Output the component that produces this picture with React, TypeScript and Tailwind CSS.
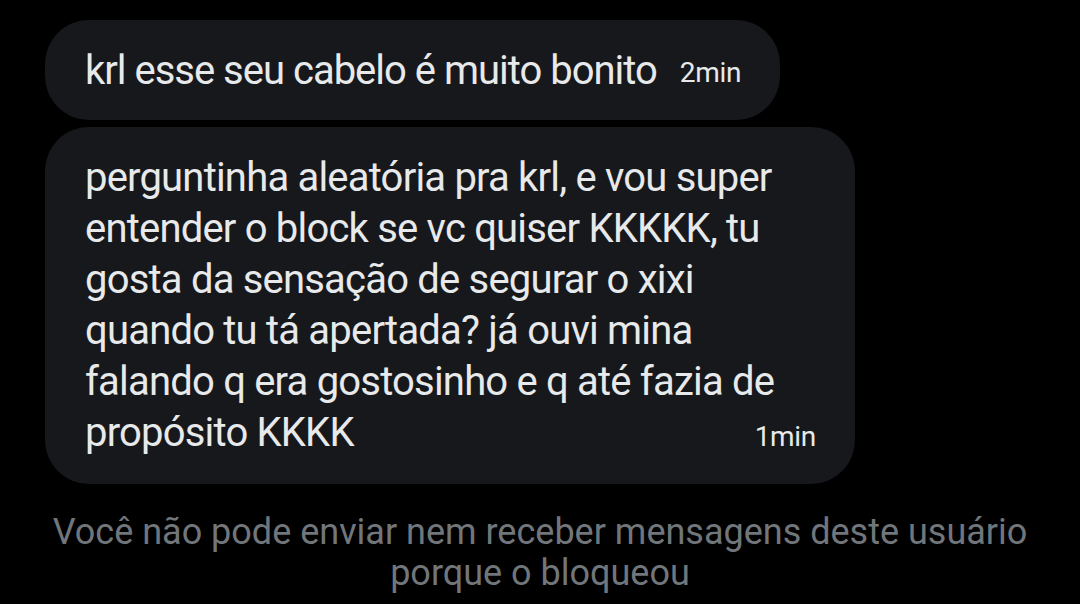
const lines = [
  "perguntinha aleatória pra krl, e vou super",
  "entender o block se vc quiser KKKKK, tu",
  "gosta da sensação de segurar o xixi",
  "quando tu tá apertada? já ouvi mina",
  "falando q era gostosinho e q até fazia de",
];

export default function App() {
  return (
    <div className="w-[1080px] h-[604px] overflow-hidden bg-black pt-[20px] font-['Roboto',sans-serif]">
      <div className="flex flex-col gap-[7px] pl-[45px]">
        <div className="flex h-[100px] w-fit items-center rounded-[44px] bg-[#16181c] pl-[40px] pr-[39px]">
          <span className="text-[40px] leading-[51px] tracking-[-1px] text-[#e7e9ea]">
            krl esse seu cabelo é muito bonito
          </span>
          <span className="ml-[23px] mt-[6px] text-[28px] tracking-[-0.3px] text-[#e7e9ea]">2min</span>
        </div>

        <div className="w-[810px] rounded-[44px] bg-[#16181c] pl-[40px] pr-[39px] pt-[25px] pb-[22px] text-[40px] leading-[51px] tracking-[-0.8px] text-[#e7e9ea]">
          {lines.map((l) => (
            <div key={l}>{l}</div>
          ))}
          <div className="flex items-baseline justify-between">
            <span>propósito KKKK</span>
            <span className="text-[28px] tracking-[-0.3px]">1min</span>
          </div>
        </div>
      </div>

      <p className="mt-[28px] text-center text-[36px] leading-[41px] text-[#71767b]">
        Você não pode enviar nem receber mensagens deste usuário
        <br />
        porque o bloqueou
      </p>
    </div>
  );
}
